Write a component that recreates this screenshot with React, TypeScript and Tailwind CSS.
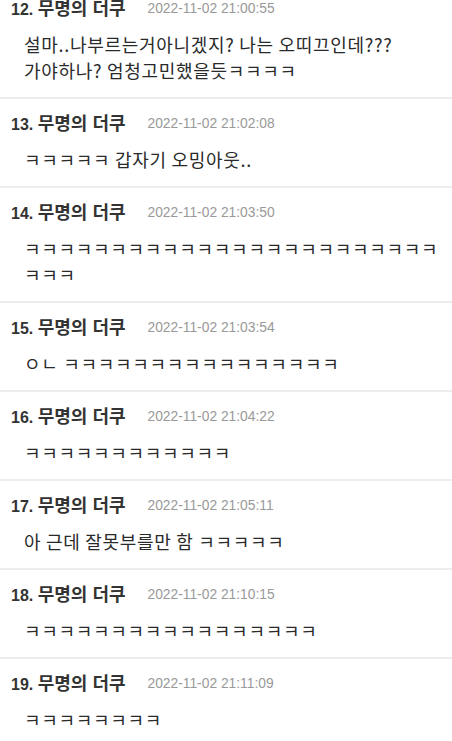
const comments = [
  {
    no: 12,
    at: "2022-11-02 21:00:55",
    body: "설마..나부르는거아니겠지? 나는 오띠끄인데???\n가야하나? 엄청고민했을듯ㅋㅋㅋㅋ",
  },
  { no: 13, at: "2022-11-02 21:02:08", body: "ㅋㅋㅋㅋㅋ 갑자기 오밍아웃.." },
  { no: 14, at: "2022-11-02 21:03:50", body: "ㅋ".repeat(27) },
  { no: 15, at: "2022-11-02 21:03:54", body: "ㅇㄴ " + "ㅋ".repeat(16) },
  { no: 16, at: "2022-11-02 21:04:22", body: "ㅋ".repeat(12) },
  { no: 17, at: "2022-11-02 21:05:11", body: "아 근데 잘못부를만 함 ㅋㅋㅋㅋㅋ" },
  { no: 18, at: "2022-11-02 21:10:15", body: "ㅋ".repeat(17) },
  { no: 19, at: "2022-11-02 21:11:09", body: "ㅋ".repeat(8) },
];

function Comment({ no, at, body }: { no: number; at: string; body: string }) {
  return (
    <li className="border-b-2 border-[#ededed] pt-[15px] pb-[14px]">
      <div className="flex items-center pl-[11px] h-5 font-['Liberation_Sans','Noto_Sans_CJK_KR',sans-serif]">
        <span className="font-bold text-[#333]">
          <span className="text-[16px]">{no}.</span>{" "}
          <span className="text-[18px]">무명의 더쿠</span>
        </span>
        <span className="ml-[22px] text-[13.8px] text-[#999]">{at}</span>
      </div>
      <p className="mt-3 pl-6 pr-2 text-[18px] tracking-[0.7px] leading-[26px] text-[#2a2a2a] whitespace-pre-wrap font-['Noto_Sans_CJK_KR',sans-serif]">
        {body}
      </p>
    </li>
  );
}

export default function App() {
  return (
    <div className="h-[741px] overflow-hidden bg-white">
      <ul className="-mt-4">
        {comments.map((c) => (
          <Comment key={c.no} {...c} />
        ))}
      </ul>
    </div>
  );
}
